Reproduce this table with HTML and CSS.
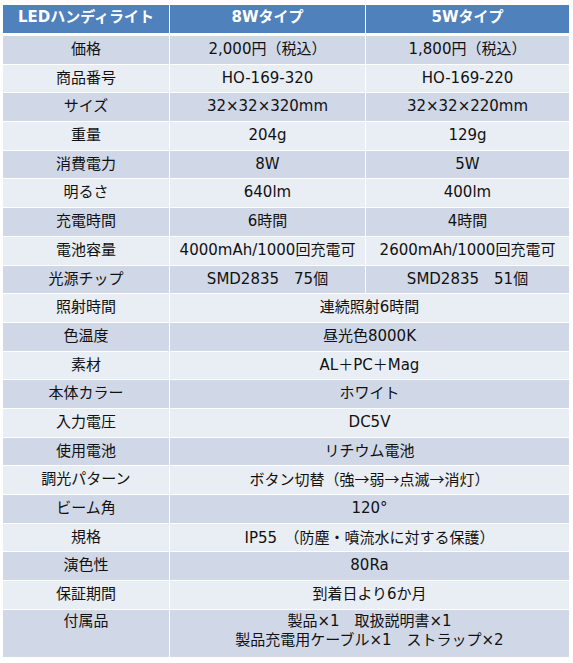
FILE: index.html
```html
<!DOCTYPE html>
<html lang="ja">
<head>
<meta charset="utf-8">
<title>LEDハンディライト</title>
<link rel="stylesheet" href="styles.css">
</head>
<body>
<table class="spec">
  <colgroup>
    <col class="c1"><col class="c2"><col class="c3">
  </colgroup>
  <thead>
    <tr><th>LEDハンディライト</th><th>8Wタイプ</th><th>5Wタイプ</th></tr>
  </thead>
  <tbody>
    <tr class="odd"><td>価格</td><td>2,000円（税込）</td><td>1,800円（税込）</td></tr>
    <tr class="even"><td>商品番号</td><td>HO-169-320</td><td>HO-169-220</td></tr>
    <tr class="odd"><td>サイズ</td><td>32×32×320mm</td><td>32×32×220mm</td></tr>
    <tr class="even"><td>重量</td><td>204g</td><td>129g</td></tr>
    <tr class="odd"><td>消費電力</td><td>8W</td><td>5W</td></tr>
    <tr class="even"><td>明るさ</td><td>640lm</td><td>400lm</td></tr>
    <tr class="odd"><td>充電時間</td><td>6時間</td><td>4時間</td></tr>
    <tr class="even"><td>電池容量</td><td>4000mAh/1000回充電可</td><td>2600mAh/1000回充電可</td></tr>
    <tr class="odd"><td>光源チップ</td><td>SMD2835　75個</td><td>SMD2835　51個</td></tr>
    <tr class="even"><td>照射時間</td><td colspan="2">連続照射6時間</td></tr>
    <tr class="odd"><td>色温度</td><td colspan="2">昼光色8000K</td></tr>
    <tr class="even"><td>素材</td><td colspan="2">AL＋PC＋Mag</td></tr>
    <tr class="odd"><td>本体カラー</td><td colspan="2">ホワイト</td></tr>
    <tr class="even"><td>入力電圧</td><td colspan="2">DC5V</td></tr>
    <tr class="odd"><td>使用電池</td><td colspan="2">リチウム電池</td></tr>
    <tr class="even"><td>調光パターン</td><td colspan="2">ボタン切替（強<span class="arrow">→</span>弱<span class="arrow">→</span>点滅<span class="arrow">→</span>消灯）</td></tr>
    <tr class="odd"><td>ビーム角</td><td colspan="2">120°</td></tr>
    <tr class="even"><td>規格</td><td colspan="2">IP55　<span class="cjk">（防塵・噴流水に対する保護）</span></td></tr>
    <tr class="odd"><td>演色性</td><td colspan="2">80Ra</td></tr>
    <tr class="even"><td>保証期間</td><td colspan="2">到着日より6か月</td></tr>
    <tr class="odd last"><td>付属品</td><td colspan="2">製品×1　取扱説明書×1<br>製品充電用ケーブル×1　ストラップ×2</td></tr>
  </tbody>
</table>
</body>
</html>
```

FILE: styles.css
```css
html, body {
  margin: 0;
  padding: 0;
  background: #ffffff;
}

body {
  padding: 5px 0 0 3px;
  font-family: "DejaVu Sans", "Noto Sans CJK JP", sans-serif;
  font-size: 15px;
  color: #111111;
}

.spec {
  width: 566px;
  table-layout: fixed;
  border-collapse: separate;
  border-spacing: 0;
}

.c1 { width: 167px; }
.c2 { width: 196px; }
.c3 { width: 203px; }

.spec th,
.spec td {
  box-sizing: border-box;
  padding: 0;
  text-align: center;
  border-right: 1px solid #ffffff;
  border-bottom: 1px solid #ffffff;
  white-space: nowrap;
}

.spec th:last-child,
.spec td:last-child {
  border-right: none;
}

.spec th {
  background: #4f81bd;
  color: #ffffff;
  font-weight: bold;
  height: 31px;
  line-height: 20px;
  padding-top: 2px;
  vertical-align: top;
  border-bottom: 3px solid #ffffff;
}

.spec td {
  height: 28.7px;
  line-height: 20px;
  padding-top: 3px;
  vertical-align: top;
}

.cjk {
  font-family: "Noto Sans CJK JP", sans-serif;
}

.arrow {
  display: inline-block;
  width: 1em;
  text-align: center;
  font-family: "Noto Sans CJK JP", sans-serif;
}

.odd td { background: #d0d8e8; }
.even td { background: #e9edf4; }

.last td {
  height: 47px;
  line-height: 19.5px;
  padding-top: 2px;
  border-bottom: none;
}
```
